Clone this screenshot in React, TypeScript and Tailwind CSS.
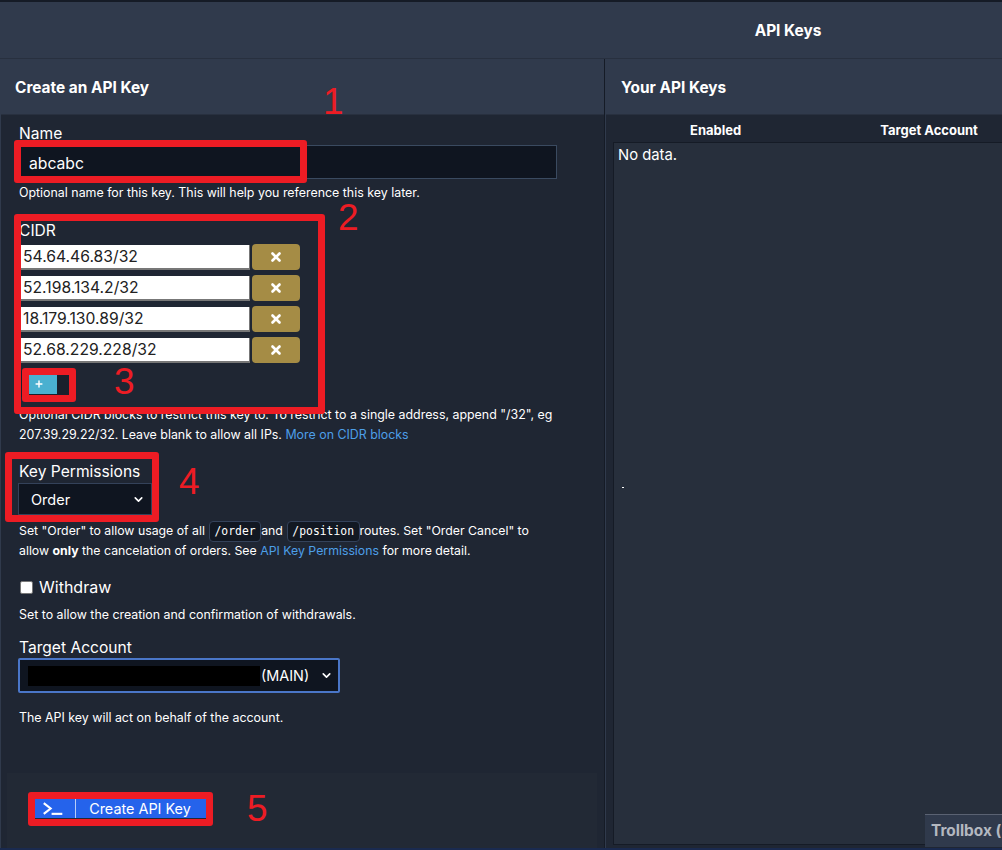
import React from "react";
import { ChevronDown, X, Plus } from "lucide-react";

const cidrs = ["54.64.46.83/32", "52.198.134.2/32", "18.179.130.89/32", "52.68.229.228/32"];

const Annotation = ({ className }: { className: string }) => (
  <div className={`absolute rounded-[3px] border-[7px] border-[#ed1c24] pointer-events-none ${className}`} />
);

const Digit = ({ className, children }: { className: string; children: React.ReactNode }) => (
  <div className={`absolute text-[37px] leading-none text-[#ed1c24] font-['Liberation_Sans',sans-serif] ${className}`}>
    {children}
  </div>
);

const Code = ({ children }: { children: React.ReactNode }) => (
  <code className="inline-block h-[21px] -my-[1px] ml-1 px-[4.5px] rounded-[4px] border border-[#34425a] bg-[#121822] font-['DejaVu_Sans_Mono',monospace] text-[11.4px] leading-[19px] align-middle">
    {children}
  </code>
);

export default function App() {
  return (
    <div className="relative w-[1002px] h-[850px] overflow-hidden bg-[#1f2633] text-white font-['Inter',sans-serif]">
      <div className="h-[2px] bg-[#151b26]" />
      <div className="h-[56px] bg-[#303a4c] flex items-center justify-center pl-[574px] text-[15.4px] font-bold pt-[1px]">
        API Keys
      </div>
      <div className="h-[790px] flex border-t border-[#28303f]">
        {/* left panel */}
        <div className="w-[605px] flex flex-col border-l border-[#303a4c] border-r border-r-[#151b26]">
          <div className="h-[56px] shrink-0 bg-[#303a4c] flex items-center pl-[14px] pt-[2px] text-[15.4px] font-bold border-b border-[#28303f]">
            Create an API Key
          </div>
          <div className="flex-1 pl-[16px] pt-[10px] text-[12.4px] relative">
            <label className="block text-[15.6px] leading-[18px] pl-[2px]">Name</label>
            <div className="mt-[2px] w-[540px] h-[34px] bg-[#0f1520] border border-[#3a4a60] flex items-center pl-[11px] pt-[3px] text-[15.7px]">
              abcabc
            </div>
            <p className="mt-[6px] pl-[2px] leading-[16px]">
              Optional name for this key. This will help you reference this key later.
            </p>

            <label className="block mt-[21px] text-[15.6px] leading-[18px] pl-[2px]">CIDR</label>
            <div className="mt-[4px] pl-[4px] flex flex-col gap-[5px]">
              {cidrs.map((ip) => (
                <div key={ip} className="flex items-center gap-[2px]">
                  <div className="w-[229px] h-[25px] bg-white border-b-2 border-r border-[#777] text-[#222] text-[15.7px] leading-[24px] pl-[2px]">
                    {ip}
                  </div>
                  <button className="w-[48px] h-[26px] rounded-[4px] bg-[#a58c45] flex items-center justify-center">
                    <X size={14} strokeWidth={4.5} className="text-white" />
                  </button>
                </div>
              ))}
            </div>
            <div className="mt-[8px] ml-[4px] w-[48px] h-[26px] flex bg-[#1a202c]">
              <div className="mt-[3px] ml-[8px] w-[28px] h-[20px] bg-[#4ab0d0] flex items-center pl-[5px]">
                <Plus size={10} strokeWidth={3.5} className="text-white" />
              </div>
            </div>
            <p className="mt-[8px] pl-[2px] leading-[19.5px] w-[560px]">
              Optional CIDR blocks to restrict this key to. To restrict to a single address, append "/32", eg
              207.39.29.22/32. Leave blank to allow all IPs.{" "}
              <span className="text-[#4d9fe8]">More on CIDR blocks</span>
            </p>

            <label className="block mt-[19px] text-[15.6px] leading-[18px] pl-[2px]">Key Permissions</label>
            <div className="mt-[2px] ml-[1px] w-[134px] h-[32px] bg-[#0f1520] border border-[#34425a] flex items-center justify-between pl-[12px] pr-[6px] pt-[1px] text-[14.5px]">
              Order
              <ChevronDown size={13} strokeWidth={3} />
            </div>
            <p className="mt-[6px] pl-[2px] leading-[19px] w-[560px] text-[12.3px]">
              Set "Order" to allow usage of all<Code>/order</Code>and<Code>/position</Code>routes. Set "Order Cancel" to
              <br />
              allow <b>only</b> the cancelation of orders. See{" "}
              <span className="text-[#4d9fe8]">API Key Permissions</span> for more detail.
            </p>

            <div className="mt-[18px] pl-[3px] flex items-center gap-[6px] text-[16px] leading-[18px]">
              <span className="w-[13px] h-[13px] rounded-[2px] bg-white border border-[#777]" />
              Withdraw
            </div>
            <p className="mt-[11px] pl-[2px] leading-[16px]">Set to allow the creation and confirmation of withdrawals.</p>

            <label className="block mt-[16px] text-[15.6px] leading-[18px] pl-[2px]">Target Account</label>
            <div className="mt-[1px] ml-[1px] w-[322px] h-[35px] bg-[#0f1520] border-2 border-[#4a76c8] rounded-[2px] flex items-center pl-[8px] pr-[5px] text-[14.4px]">
              <span className="w-[232px] h-[20px] bg-black shrink-0" />
              <span className="ml-[1px] flex-1">(MAIN)</span>
              <ChevronDown size={13} strokeWidth={3} />
            </div>
            <p className="mt-[17px] pl-[2px] leading-[16px]">The API key will act on behalf of the account.</p>

            <div className="absolute left-[6px] bottom-0 w-[590px] h-[75px] bg-[#222935] flex items-start pl-[28px] pt-[25px]">
              <button className="w-[171px] h-[20px] bg-[#2563eb] flex items-center text-[14.4px]">
                <svg width="41" height="20" viewBox="0 0 41 20" fill="none" stroke="white" strokeWidth="2.2" className="border-r border-[#b9cdf7]">
                  <path d="M9 5l7 5.5-7 5.5" />
                  <path d="M17 16h11" />
                </svg>
                <span className="flex-1 text-center pr-[2px] pt-[1px]">Create API Key</span>
              </button>
            </div>
          </div>
        </div>

        {/* right panel */}
        <div className="flex-1 flex flex-col border-l border-[#303a4c]">
          <div className="h-[56px] shrink-0 bg-[#303a4c] flex items-center pl-[15px] pt-[2px] text-[15.4px] font-bold border-b border-[#28303f]">
            Your API Keys
          </div>
          <div className="h-[27px] shrink-0 flex items-center pt-[5px] text-[13px] font-bold">
            <span className="ml-[84px]">Enabled</span>
            <span className="ml-[139px]">Target Account</span>
          </div>
          <div className="flex-1 ml-[7px] mb-[3px] bg-[#272f3c] border-t border-l border-b border-[#151b26] pl-[4px] pt-[1px] text-[14.8px] relative">
            No data.
            <span className="absolute left-[8px] top-[344px] w-[2px] h-[1px] bg-white" />
          </div>
        </div>
      </div>
      <div className="absolute left-0 right-0 bottom-0 h-[2px] bg-[#1a2a4f]" />

      <div className="absolute right-0 bottom-[3px] w-[77px] h-[33px] bg-[#303a4c] border-t border-[#5a6272] pl-[6px] text-[15.4px] font-bold leading-[31px] text-[#b4b8c0] overflow-hidden whitespace-nowrap">
        Trollbox (
      </div>

      {/* red annotations on the screenshot */}
      <Annotation className="left-[14px] top-[140px] w-[293px] h-[43px]" />
      <Annotation className="left-[14px] top-[214px] w-[311px] h-[200px]" />
      <Annotation className="left-[22px] top-[368px] w-[54px] h-[34px]" />
      <Annotation className="left-[5px] top-[452px] w-[154px] h-[70px]" />
      <Annotation className="left-[28px] top-[792px] w-[185px] h-[34px]" />
      <Digit className="left-[323px] top-[83px]">1</Digit>
      <Digit className="left-[338px] top-[199px]">2</Digit>
      <Digit className="left-[114px] top-[363px]">3</Digit>
      <Digit className="left-[179px] top-[463px]">4</Digit>
      <Digit className="left-[247px] top-[790px]">5</Digit>
    </div>
  );
}
